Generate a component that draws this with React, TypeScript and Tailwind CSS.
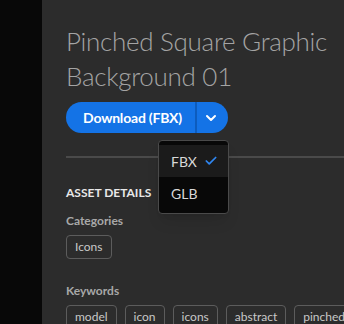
import { Check, ChevronDown } from 'lucide-react';

const keywords = ['model', 'icon', 'icons', 'abstract', 'pinched'];

function Tag({ label }: { label: string }) {
  return (
    <span className="shrink-0 rounded-[4px] border border-[#5c5c5c] px-[8px] h-[24px] flex items-center text-[12px] text-[#c8c8c8]">
      {label}
    </span>
  );
}

export default function App() {
  return (
    <div className="flex h-[324px] w-[344px] overflow-hidden bg-[#080808] font-['Lato',sans-serif]">
      <div className="w-[42px] shrink-0" />
      <main className="flex-1 bg-[#2c2c2c] pl-[24px] pt-[24px]">
        <h1 className="text-[26px] leading-[35px] font-light text-[#a4a4a4] tracking-[-0.3px] whitespace-nowrap">
          Pinched Square Graphic
          <br />
          Background 01
        </h1>

        <div className="relative mt-[8px]">
          <div className="flex h-[31px] w-[162px]">
            <button className="flex-1 rounded-l-full bg-[#1473e6] text-white text-[14px] font-bold tracking-[-0.2px] pl-[4px]">
              Download (FBX)
            </button>
            <div className="w-[2px] bg-[#0d5cbd]" />
            <button className="w-[31px] rounded-r-full bg-[#1473e6] flex items-center justify-center pr-[3px]">
              <ChevronDown size={16} strokeWidth={3} className="text-white" />
            </button>
          </div>

          <div className="mt-[23px] h-[2px] bg-[#4a4a4a]" />

          <div className="absolute left-[92px] top-[38px] w-[71px] rounded-[4px] border border-[#4a4a4a] bg-[#080808] py-[4px] shadow-lg">
            <div className="flex h-[32px] items-center justify-between bg-[#1b1b1b] pl-[12px] pr-[10px] text-[14px] text-[#d8d8d8]">
              FBX
              <Check size={14} strokeWidth={3} className="text-[#2f86f0]" />
            </div>
            <div className="flex h-[32px] items-center pl-[12px] text-[14px] text-[#d8d8d8]">GLB</div>
          </div>
        </div>

        <h2 className="mt-[27px] text-[12px] font-bold text-[#e8e8e8] leading-[16px]">ASSET DETAILS</h2>

        <h3 className="mt-[12px] text-[12px] font-bold text-[#a8a8a8] leading-[16px]">Categories</h3>
        <div className="mt-[6px] flex">
          <Tag label="Icons" />
        </div>

        <h3 className="mt-[24px] text-[12px] font-bold text-[#a8a8a8] leading-[16px]">Keywords</h3>
        <div className="mt-[6px] flex gap-[8px]">
          {keywords.map((k) => (
            <Tag key={k} label={k} />
          ))}
        </div>
      </main>
    </div>
  );
}
